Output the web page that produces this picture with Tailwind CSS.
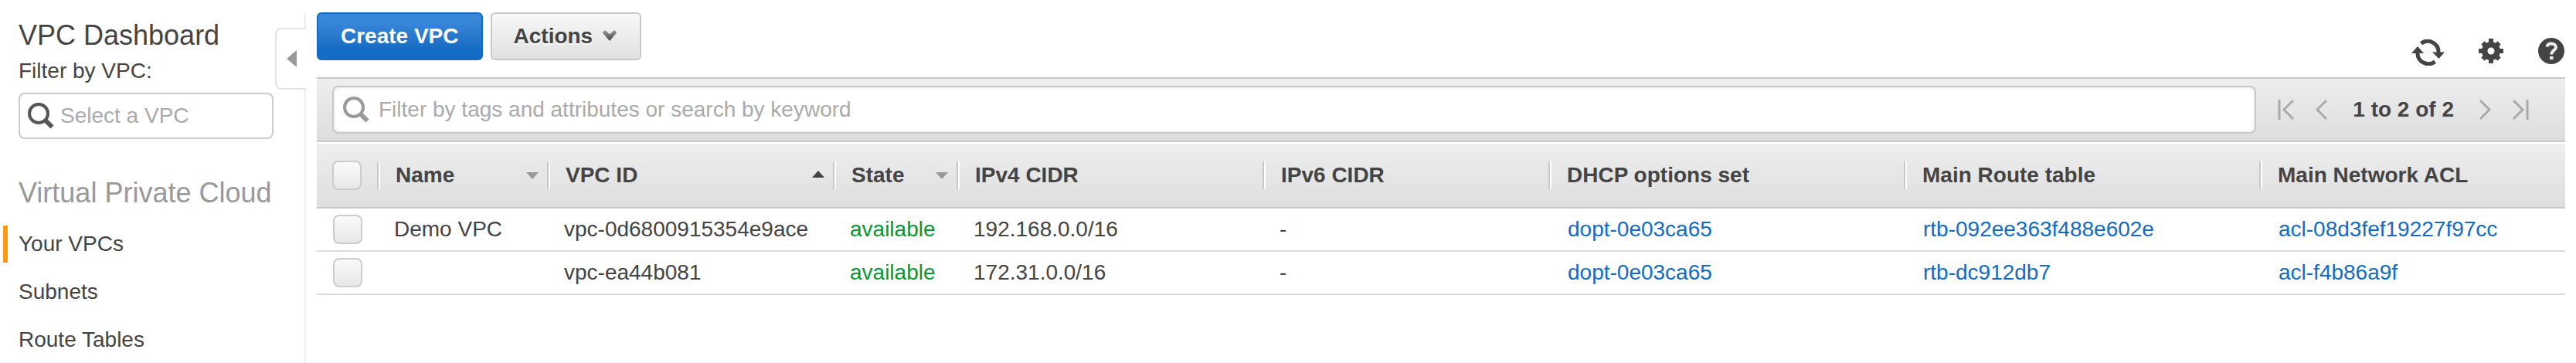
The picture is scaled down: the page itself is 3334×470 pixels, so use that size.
<!DOCTYPE html>
<html lang="en">
<head>
  <meta charset="UTF-8">
  <meta name="viewport" content="width=device-width, initial-scale=1.0">
  <title>VPC Dashboard</title>
  <script src="https://cdn.jsdelivr.net/npm/@tailwindcss/browser@4"></script>
</head>
<body class="bg-white text-[#444] text-[28px] leading-8 font-['Liberation_Sans',Arial,sans-serif]">
  <div class="flex min-h-screen">
    <!-- Sidebar -->
    <aside class="relative mt-4 w-[396px] shrink-0 border-r-2 border-[#eee]">
      <div class="pl-6 pr-10 pt-[10px]">
        <h1 class="text-[36px] leading-10"><a href="#">VPC Dashboard</a></h1>
        <label for="vpc-filter" class="mt-[10px] block">Filter by VPC:</label>
        <div class="mt-3 flex h-[60px] items-center rounded-lg border-2 border-[#ccc] pl-[10px]">
          <svg class="h-[34px] w-[34px] shrink-0" viewBox="0 0 34 34" fill="none" stroke="#555">
            <circle cx="14" cy="14" r="12" stroke-width="4"/>
            <path d="M22.5 22.5L31.5 31.5" stroke-width="6"/>
          </svg>
          <input id="vpc-filter" type="text" placeholder="Select a VPC" class="ml-2 w-full min-w-0 outline-none placeholder:text-[#aaa]">
        </div>
      </div>
      <button type="button" aria-label="Collapse sidebar" class="absolute -right-[2px] top-5 flex h-20 w-10 items-center justify-end rounded-l-lg border-2 border-r-0 border-[#e4e4e4] bg-white pr-3">
        <svg class="h-[22px] w-[13px]" viewBox="0 0 13 22" fill="#999"><path d="M13 0V22L0 11z"/></svg>
      </button>

      <h2 class="mt-[50px] pl-6 text-[36px] leading-10 text-[#999]">Virtual Private Cloud</h2>
      <nav class="mt-[22px] flex flex-col gap-[14px] pl-1">
        <a href="#" class="flex h-12 items-center border-l-[6px] border-[#ff9914] pl-[14px]">Your VPCs</a>
        <a href="#" class="flex h-12 items-center border-l-[6px] border-transparent pl-[14px]">Subnets</a>
        <a href="#" class="flex h-12 items-center border-l-[6px] border-transparent pl-[14px]">Route Tables</a>
      </nav>
    </aside>

    <main class="min-w-0 flex-1 pl-[14px] pr-[14px] pt-4">
      <!-- Action buttons -->
      <div class="flex h-[84px] items-start gap-[10px]">
        <button type="button" class="h-[62px] rounded-md border-2 border-[#146bc3] bg-linear-to-b from-[#3886d8] from-20% to-[#146bc3] to-80% px-[29px] font-bold text-white">Create VPC</button>
        <button type="button" class="flex h-[62px] items-center gap-3 rounded-md border-2 border-[#c8c8c8] bg-linear-to-b from-[#f8f8f8] to-[#e0e0e0] pl-7 pr-[29px] font-bold [text-shadow:0_2px_0_#fff]">
          Actions
          <svg class="mb-[2px] h-[14px] w-5" viewBox="0 0 20 15">
            <defs>
              <linearGradient id="chevron" x1="0" y1="0" x2="0" y2="1">
                <stop offset="0" stop-color="#999"/>
                <stop offset="1" stop-color="#444"/>
              </linearGradient>
            </defs>
            <path d="M3.500 0L10 5.500L16.500 0L20 3.500L10 15L0 3.500z" fill="url(#chevron)"/>
          </svg>
        </button>
        <div class="ml-auto flex items-center gap-11 pt-[31px]">
          <button type="button" aria-label="Refresh">
            <svg class="mt-1 h-[34px] w-[43px]" viewBox="0 0 43 34" fill="none" stroke="#444" stroke-width="5">
              <path d="M12.5 5.2A14 14 0 0 1 35 17"/>
              <path d="M27 16.5L43 16.5L35.5 25z" fill="#444" stroke="none"/>
              <path d="M30.5 28.8A14 14 0 0 1 8 17"/>
              <path d="M0 18L8 9L16 18z" fill="#444" stroke="none"/>
            </svg>
          </button>
          <button type="button" aria-label="Settings">
            <svg class="h-[34px] w-[32px]" viewBox="-16 -17 32 34">
              <g fill="#444">
                <circle r="12"/>
                <path d="M-3-16H3V16H-3zM-16-3V3H16V-3z"/>
                <path d="M-3-15H3V15H-3zM-15-3V3H15V-3z" transform="rotate(45)"/>
              </g>
              <circle r="4.500" fill="#fff"/>
            </svg>
          </button>
          <button type="button" aria-label="Help">
            <svg class="h-[36px] w-[36px]" viewBox="0 0 36 36">
              <circle cx="18" cy="18" r="17" fill="#444"/>
              <path d="M12.500 12.500C13 9.300 15.500 8.500 18.200 8.500C21.500 8.500 24 10.500 24 13.200C24 17.200 18.300 17 18.300 22.500" fill="none" stroke="#eee" stroke-width="4"/>
              <path d="M16 25H20.500V29H16z" fill="#eee"/>
            </svg>
          </button>
        </div>
      </div>

      <!-- Search and paging -->
      <div class="flex h-[84px] items-center border-y-2 border-[#c8c8c8] bg-linear-to-b from-[#eee] to-[#ddd] pl-5 pr-[47px]">
        <label class="flex h-[62px] flex-1 items-center rounded-lg border-2 border-[#c8c8c8] bg-white pl-3 shadow-[inset_0_0_4px_#ddd]">
          <svg class="h-[34px] w-[34px] shrink-0" viewBox="0 0 34 34" fill="none" stroke="#999" aria-hidden="true">
            <circle cx="14" cy="14" r="12" stroke-width="4"/>
            <path d="M22.500 22.500L31.500 31.500" stroke-width="6"/>
          </svg>
          <input type="text" aria-label="Filter VPCs" placeholder="Filter by tags and attributes or search by keyword" class="ml-3 w-full min-w-0 outline-none placeholder:text-[#aaa]">
        </label>
        <div class="ml-7 flex items-center">
          <button type="button" aria-label="First page">
            <svg class="h-[26px] w-[21px]" viewBox="0 0 21 26" fill="none" stroke="#aaa" stroke-width="3"><path d="M2 0V26M20 1L8 13L20 25"/></svg>
          </button>
          <button type="button" aria-label="Previous page" class="ml-7">
            <svg class="h-[26px] w-[15px]" viewBox="0 0 15 26" fill="none" stroke="#aaa" stroke-width="3"><path d="M14 1L2 13L14 25"/></svg>
          </button>
          <span class="mx-[33px] font-bold">1 to 2 of 2</span>
          <button type="button" aria-label="Next page" class="mr-7">
            <svg class="h-[26px] w-[15px]" viewBox="0 0 15 26" fill="none" stroke="#aaa" stroke-width="3"><path d="M1 1L13 13L1 25"/></svg>
          </button>
          <button type="button" aria-label="Last page">
            <svg class="h-[26px] w-[21px]" viewBox="0 0 21 26" fill="none" stroke="#aaa" stroke-width="3"><path d="M19 0V26M1 1L13 13L1 25"/></svg>
          </button>
        </div>
      </div>

      <!-- VPC list -->
      <table class="mt-[2px] w-full table-fixed border-separate border-spacing-0 text-left">
        <colgroup>
          <col class="w-[78px]">
          <col class="w-[220px]">
          <col class="w-[370px]">
          <col class="w-[160px]">
          <col class="w-[396px]">
          <col class="w-[370px]">
          <col class="w-[460px]">
          <col class="w-[460px]">
          <col>
        </colgroup>
        <thead class="bg-linear-to-b from-[#eee] to-[#dedede]">
          <tr class="h-[84px]">
            <th class="border-b-2 border-[#c8c8c8] pl-5">
              <input type="checkbox" aria-label="Select all" class="block h-[38px] w-[38px] appearance-none rounded-lg border-2 border-[#ccc] bg-linear-to-b from-[#fafafa] to-[#e8e8e8]">
            </th>
            <th class="border-b-2 border-[#c8c8c8]">
              <button type="button" class="flex h-9 w-full items-center justify-between border-l-2 border-[#c8c8c8] pl-[22px] pr-[11px] font-bold shadow-[inset_2px_0_0_#fff]">
                Name
                <svg class="h-[9px] w-4" viewBox="0 0 16 9" fill="#999"><path d="M0 0H16L8 9z"/></svg>
              </button>
            </th>
            <th class="border-b-2 border-[#c8c8c8]">
              <button type="button" class="flex h-9 w-full items-center justify-between border-l-2 border-[#c8c8c8] pl-[22px] pr-[11px] font-bold shadow-[inset_2px_0_0_#fff]">
                VPC ID
                <svg class="mb-1 h-[9px] w-4" viewBox="0 0 16 9" fill="#444"><path d="M0 9H16L8 0z"/></svg>
              </button>
            </th>
            <th class="border-b-2 border-[#c8c8c8]">
              <button type="button" class="flex h-9 w-full items-center justify-between border-l-2 border-[#c8c8c8] pl-[22px] pr-[11px] font-bold shadow-[inset_2px_0_0_#fff]">
                State
                <svg class="h-[9px] w-4" viewBox="0 0 16 9" fill="#999"><path d="M0 0H16L8 9z"/></svg>
              </button>
            </th>
            <th class="border-b-2 border-[#c8c8c8]">
              <div class="flex h-9 items-center border-l-2 border-[#c8c8c8] pl-[22px] shadow-[inset_2px_0_0_#fff]">IPv4 CIDR</div>
            </th>
            <th class="border-b-2 border-[#c8c8c8]">
              <div class="flex h-9 items-center border-l-2 border-[#c8c8c8] pl-[22px] shadow-[inset_2px_0_0_#fff]">IPv6 CIDR</div>
            </th>
            <th class="border-b-2 border-[#c8c8c8]">
              <div class="flex h-9 items-center border-l-2 border-[#c8c8c8] pl-[22px] shadow-[inset_2px_0_0_#fff]">DHCP options set</div>
            </th>
            <th class="border-b-2 border-[#c8c8c8]">
              <div class="flex h-9 items-center border-l-2 border-[#c8c8c8] pl-[22px] shadow-[inset_2px_0_0_#fff]">Main Route table</div>
            </th>
            <th class="border-b-2 border-[#c8c8c8]">
              <div class="flex h-9 items-center border-l-2 border-[#c8c8c8] pl-[22px] shadow-[inset_2px_0_0_#fff]">Main Network ACL</div>
            </th>
          </tr>
        </thead>
        <tbody>
          <tr class="h-14">
            <td class="border-b-2 border-[#ddd] pl-[21px]">
              <input type="checkbox" aria-label="Select Demo VPC" class="block h-[38px] w-[38px] appearance-none rounded-lg border-2 border-[#ccc] bg-linear-to-b from-[#fafafa] to-[#e8e8e8]">
            </td>
            <td class="border-b-2 border-[#ddd] pl-[22px]">Demo VPC</td>
            <td class="border-b-2 border-[#ddd] pl-[22px]">vpc-0d6800915354e9ace</td>
            <td class="border-b-2 border-[#ddd] pl-[22px] text-[#093]">available</td>
            <td class="border-b-2 border-[#ddd] pl-[22px]">192.168.0.0/16</td>
            <td class="border-b-2 border-[#ddd] pl-[22px]">-</td>
            <td class="border-b-2 border-[#ddd] pl-[25px]"><a href="#" class="text-[#146bc3]">dopt-0e03ca65</a></td>
            <td class="border-b-2 border-[#ddd] pl-[25px]"><a href="#" class="text-[#146bc3]">rtb-092ee363f488e602e</a></td>
            <td class="border-b-2 border-[#ddd] pl-[25px]"><a href="#" class="text-[#146bc3]">acl-08d3fef19227f97cc</a></td>
          </tr>
          <tr class="h-14">
            <td class="border-b-2 border-[#ddd] pl-[21px]">
              <input type="checkbox" aria-label="Select vpc-ea44b081" class="block h-[38px] w-[38px] appearance-none rounded-lg border-2 border-[#ccc] bg-linear-to-b from-[#fafafa] to-[#e8e8e8]">
            </td>
            <td class="border-b-2 border-[#ddd] pl-[22px]"></td>
            <td class="border-b-2 border-[#ddd] pl-[22px]">vpc-ea44b081</td>
            <td class="border-b-2 border-[#ddd] pl-[22px] text-[#093]">available</td>
            <td class="border-b-2 border-[#ddd] pl-[22px]">172.31.0.0/16</td>
            <td class="border-b-2 border-[#ddd] pl-[22px]">-</td>
            <td class="border-b-2 border-[#ddd] pl-[25px]"><a href="#" class="text-[#146bc3]">dopt-0e03ca65</a></td>
            <td class="border-b-2 border-[#ddd] pl-[25px]"><a href="#" class="text-[#146bc3]">rtb-dc912db7</a></td>
            <td class="border-b-2 border-[#ddd] pl-[25px]"><a href="#" class="text-[#146bc3]">acl-f4b86a9f</a></td>
          </tr>
        </tbody>
      </table>
    </main>
  </div>
</body>
</html>
